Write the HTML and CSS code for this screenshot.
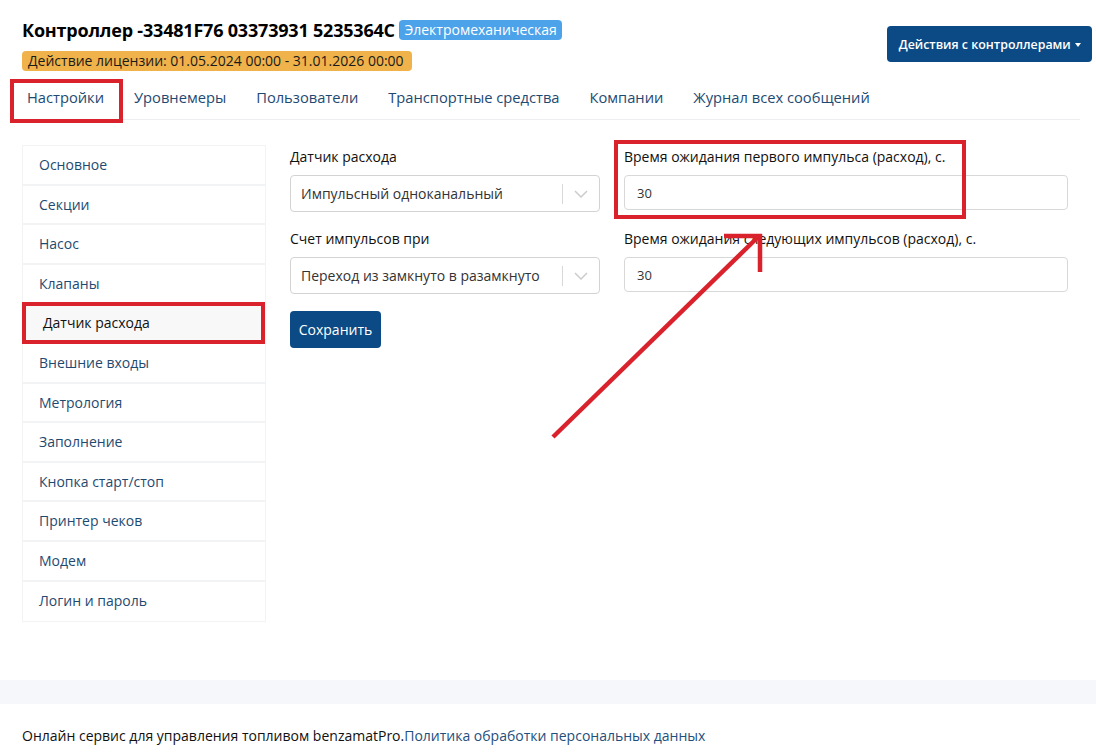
FILE: index.html
```html
<!DOCTYPE html>
<html lang="ru">
<head>
<meta charset="utf-8">
<title>Контроллер</title>
<link rel="stylesheet" href="styles.css">
</head>
<body>
<div class="page">
  <header class="head">
    <div class="head-left">
      <h1 class="title">Контроллер -33481F76 03373931 5235364C <span class="badge badge-blue">Электромеханическая</span></h1>
      <span class="badge badge-orange">Действие лицензии: 01.05.2024 00:00 - 31.01.2026 00:00</span>
    </div>
    <button class="btn btn-primary btn-drop">Действия с контроллерами <span class="caret"></span></button>
  </header>

  <nav class="tabs">
    <a class="tab tab-active mark">Настройки</a>
    <a class="tab">Уровнемеры</a>
    <a class="tab">Пользователи</a>
    <a class="tab">Транспортные средства</a>
    <a class="tab">Компании</a>
    <a class="tab">Журнал всех сообщений</a>
  </nav>

  <div class="content">
    <ul class="side">
      <li class="side-item">Основное</li>
      <li class="side-item">Секции</li>
      <li class="side-item">Насос</li>
      <li class="side-item">Клапаны</li>
      <li class="side-item side-active mark">Датчик расхода</li>
      <li class="side-item">Внешние входы</li>
      <li class="side-item">Метрология</li>
      <li class="side-item">Заполнение</li>
      <li class="side-item">Кнопка старт/стоп</li>
      <li class="side-item">Принтер чеков</li>
      <li class="side-item">Модем</li>
      <li class="side-item">Логин и пароль</li>
    </ul>

    <form class="form">
      <div class="col">
        <div class="field">
          <label class="label">Датчик расхода</label>
          <div class="select">
            <span class="select-value">Импульсный одноканальный</span>
            <span class="select-sep"></span>
            <svg class="chev" width="14" height="8" viewBox="0 0 14 8"><path d="M1 1l6 6 6-6" fill="none" stroke="#cccccc" stroke-width="1.5"/></svg>
          </div>
        </div>
        <div class="field">
          <label class="label">Счет импульсов при</label>
          <div class="select">
            <span class="select-value">Переход из замкнуто в разамкнуто</span>
            <span class="select-sep"></span>
            <svg class="chev" width="14" height="8" viewBox="0 0 14 8"><path d="M1 1l6 6 6-6" fill="none" stroke="#cccccc" stroke-width="1.5"/></svg>
          </div>
        </div>
        <button type="button" class="btn btn-primary btn-save">Сохранить</button>
      </div>
      <div class="col">
        <div class="field field-input field-mark">
          <label class="label">Время ожидания первого импульса (расход), с.</label>
          <input class="input" value="30">
        </div>
        <div class="field field-input">
          <label class="label">Время ожидания следующих импульсов (расход), с.</label>
          <input class="input" value="30">
        </div>
      </div>
    </form>
  </div>

  <svg class="arrow" width="1096" height="753" viewBox="0 0 1096 753">
    <g stroke="#d9222c" stroke-width="4.5" fill="none" stroke-linecap="butt">
      <path d="M553 437L758 237"/>
      <path d="M724 236H762M760 234V272"/>
    </g>
  </svg>
</div>

<div class="band"></div>
<footer class="footer">Онлайн сервис для управления топливом benzamatPro.<a class="link">Политика обработки персональных данных</a></footer>
</body>
</html>
```

FILE: styles.css
```css
*, *::before, *::after { box-sizing: border-box; }
html, body { margin: 0; padding: 0; background: #fff; }
body {
  font-family: "Open Sans", "Noto Sans", sans-serif;
  color: #212529;
  font-size: 14px;
}
.page { position: relative; padding: 0 16px 0 22px; }

.head { display: flex; justify-content: space-between; align-items: flex-start; padding-top: 19px; }
.head-left { display: flex; flex-direction: column; align-items: flex-start; gap: 9px; }
.title { margin: 0; font-size: 18px; font-weight: 700; line-height: 23px; color: #000; letter-spacing: -0.2px; }
.badge { display: inline-block; font-weight: 400; border-radius: 4px; }
.badge-blue { background: #4da3ea; color: #fff; font-size: 14px; line-height: 20px; padding: 0 5px; vertical-align: 2px; letter-spacing: 0; }
.badge-orange { background: #f0b24a; color: #1a1a1a; font-size: 14px; line-height: 20px; padding: 0 8px 0 6px; }

.btn { border: 0; border-radius: 4px; font-family: inherit; font-size: 13px; color: #fff; cursor: pointer; }
.btn-primary { background: #0b4a84; }
.btn-drop { margin-top: 7px; margin-right: -12px; height: 36px; padding: 0 11px 0 12px; font-weight: 600; font-size: 12.4px; }
.caret { display: inline-block; border-top: 4px solid #fff; border-left: 3.5px solid transparent; border-right: 3.5px solid transparent; vertical-align: 2px; margin-left: 1px; }

.tabs { display: flex; margin-top: 9px; border-bottom: 1px solid #eceef1; }
.tab { display: block; padding: 7px 15px 12px; font-size: 14.7px; line-height: 20px; color: #1e4a72; }
.tab:first-child { margin-left: -11px; padding-left: 16px; }

.mark { position: relative; }
.mark::after { content: ""; position: absolute; border: 4px solid #d9222c; pointer-events: none; }
.tab.mark::after { left: -1px; right: -4px; top: -1px; bottom: -4px; }

.content { display: flex; gap: 24px; padding-top: 25px; }
.side { list-style: none; margin: 0; padding: 0; width: 244px; border: 1px solid #f2f3f4; flex: none; }
.side-item { height: 39.6px; line-height: 38px; padding-left: 16px; font-size: 14px; color: #1f4a70; border-bottom: 2px solid #f2f3f4; }
.side-item:last-child { border-bottom: 0; }
.side-active { background: #f8f8f8; color: #111; padding-left: 20px; }
.side-item.mark::after { left: -1px; right: 0; top: -2px; bottom: -2px; }

.form { display: grid; grid-template-columns: 310px 444px; gap: 24px; padding-top: 2px; align-self: flex-start; }
.col { display: flex; flex-direction: column; }
.field { display: flex; flex-direction: column; margin-bottom: 17px; }
.field-input { margin-bottom: 19px; }
.label { font-size: 14px; line-height: 20px; color: #111; margin-bottom: 8px; }
.select { height: 37px; border: 1px solid #d3d3d3; border-radius: 4px; display: flex; align-items: center; padding-left: 10px; }
.select-value { flex: 1; font-size: 14px; color: #333; }
.select-sep { width: 1px; height: 20px; background: #d8d8d8; }
.chev { margin: 0 11px 0 11px; }
.input { height: 35px; border: 1px solid #d8d8d8; border-radius: 4px; padding: 0 12px; font-family: inherit; font-size: 13px; color: #333; }
.btn-save { width: 91px; height: 37px; margin-top: 0; font-size: 14px; }

.field-mark { position: relative; }
.field-mark::after { content: ""; position: absolute; left: -10px; top: -7px; width: 352px; height: 79px; border: 4px solid #d9222c; }

.arrow { position: absolute; left: 0; top: 0; pointer-events: none; }

.band { height: 24px; background: #f6f7fa; margin-top: 58px; }
.footer { padding: 22px 22px 20px; font-size: 14px; color: #111; }
.link { color: #1e4f7d; }
```
